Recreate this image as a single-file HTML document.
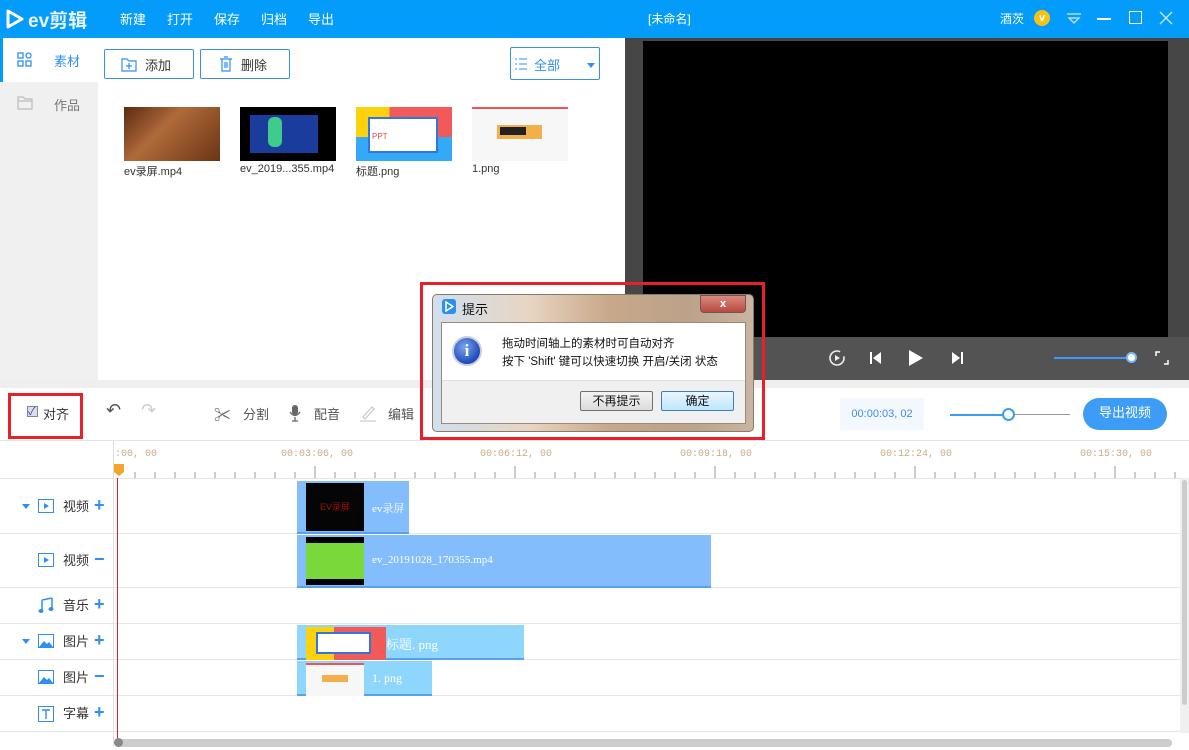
<!DOCTYPE html>
<html><head><meta charset="utf-8"><style>
*{margin:0;padding:0;box-sizing:border-box}
body{width:1189px;height:750px;overflow:hidden;position:relative;font-family:"Liberation Sans","Noto Sans CJK SC",sans-serif;font-size:13px;color:#333;background:#fff}
.a{position:absolute}
.tb{left:0;top:0;width:1189px;height:38px;background:#049cfb;color:#fff}
.menu span{position:absolute;top:9px;font-size:13px}
.btn{border:1px solid #3c8ee8;border-radius:2px;background:#fff;color:#333;font-size:13px}
.lbl{font-size:13px;color:#333}
.ruler span{position:absolute;top:8px;font-size:10px;color:#c9a985;font-family:"Liberation Mono",monospace}
.row{position:absolute;left:0;width:1180px;border-bottom:1px solid #e6e6e6}
.tl{position:absolute;font-size:13px;color:#333}
.plus{position:absolute;color:#2f8ff0;font-size:18px;font-weight:bold}
.clip{position:absolute;background:#84bdfb;border-bottom:2px solid #5a9ef0}
.clip span{position:absolute;color:#fff;font-family:"Liberation Serif","Noto Serif CJK SC",serif;font-size:11px}
</style></head><body>
<div class="a tb">
 <svg class="a" style="left:6px;top:9px" width="18" height="20"><path d="M2 2 L16 10 L2 18 Z" fill="none" stroke="#fff" stroke-width="3" stroke-linejoin="round"/></svg>
 <div class="a" style="left:28px;top:6px;font-size:19px;font-weight:bold;color:#e8f4ff">ev剪辑</div>
 <div class="menu"><span style="left:120px">新建</span><span style="left:167px">打开</span><span style="left:214px">保存</span><span style="left:261px">归档</span><span style="left:308px">导出</span></div>
 <div class="a" style="left:648px;top:10px;font-size:12px">[未命名]</div>
 <div class="a" style="left:1000px;top:10px;font-size:12px">酒茨</div>
 <div class="a" style="left:1034px;top:10px;width:16px;height:16px;border-radius:50%;background:#f6c315;color:#fff;font-size:11px;text-align:center;line-height:16px;font-weight:bold">v</div>
 <svg class="a" style="left:1066px;top:12px" width="16" height="14"><path d="M1 2H15M3 6H13L8 11Z" fill="none" stroke="#cde8ff" stroke-width="1.3"/></svg>
 <div class="a" style="left:1097px;top:18px;width:14px;height:1.5px;background:#fff"></div>
 <div class="a" style="left:1129px;top:11px;width:13px;height:13px;border:1.5px solid #fff"></div>
 <svg class="a" style="left:1159px;top:11px" width="14" height="14"><path d="M1 1L13 13M13 1L1 13" stroke="#cde8ff" stroke-width="1.3"/></svg>
</div>
<!-- sidebar -->
<div class="a" style="left:0;top:38px;width:98px;height:342px;background:#f0f0f0"></div>
<div class="a" style="left:0;top:38px;width:98px;height:44px;background:#fff;border-left:3px solid #049cfb"></div>
<svg class="a" style="left:17px;top:52px" width="16" height="16"><g fill="none" stroke="#2f8ff0" stroke-width="1.3"><rect x="1" y="1" width="5" height="5"/><rect x="1" y="9" width="5" height="5"/><rect x="9" y="9" width="5" height="5"/><circle cx="11.5" cy="3.5" r="2.5"/></g></svg>
<div class="a" style="left:54px;top:51px;color:#2f8ff0">素材</div>
<svg class="a" style="left:17px;top:96px" width="16" height="14"><path d="M1 1H6L8 3H15V13H1Z M1 5H15" fill="none" stroke="#bbb" stroke-width="1.2"/></svg>
<div class="a" style="left:54px;top:95px;color:#777">作品</div>
<!-- media -->
<div class="a btn" style="left:104px;top:49px;width:90px;height:30px"><svg class="a" style="left:16px;top:7px" width="16" height="15"><path d="M1 2H6L8 4H15V14H1Z M8 6V12M5 9H11" fill="none" stroke="#2f8ff0" stroke-width="1.2"/></svg><span class="a" style="left:40px;top:5px">添加</span></div>
<div class="a btn" style="left:200px;top:49px;width:90px;height:30px"><svg class="a" style="left:18px;top:6px" width="14" height="16"><path d="M1 3H13M5 1H9M3 3V15H11V3M6 6V12M8 6V12" fill="none" stroke="#2f8ff0" stroke-width="1.2"/></svg><span class="a" style="left:40px;top:5px">删除</span></div>
<div class="a btn" style="left:510px;top:47px;width:90px;height:33px"><svg class="a" style="left:4px;top:10px" width="12" height="12"><path d="M0 1H2M4 1H12M0 6H2M4 6H12M0 11H2M4 11H12" stroke="#2f8ff0"/></svg><span class="a" style="left:23px;top:7px;color:#2f8ff0">全部</span><div class="a" style="left:76px;top:15px;border:4px solid transparent;border-top:5px solid #2f8ff0"></div></div>
<div class="a" style="left:124px;top:107px;width:96px;height:54px;background:linear-gradient(135deg,#5a2a12,#b06a3a 40%,#6a3413)"></div>
<div class="a" style="left:240px;top:107px;width:96px;height:54px;background:#000"><div class="a" style="left:10px;top:8px;width:68px;height:38px;background:#1a3c9c"></div><div class="a" style="left:28px;top:10px;width:14px;height:30px;background:#3ecb8c;border-radius:6px"></div></div>
<div class="a" style="left:356px;top:107px;width:96px;height:54px;background:linear-gradient(90deg,#fdd10c 35%,#f25a5a 35%)"><div class="a" style="left:0;top:30px;width:96px;height:24px;background:#34a9f5"></div><div class="a" style="left:12px;top:10px;width:70px;height:36px;background:#fff;border:2px solid #3076e0"></div><div class="a" style="left:16px;top:25px;font-size:8px;color:#f04848">PPT</div></div>
<div class="a" style="left:472px;top:107px;width:96px;height:54px;background:#f7f7f7;border-top:2px solid #e55"><div class="a" style="left:25px;top:16px;width:45px;height:14px;background:#f3b04a"></div><div class="a" style="left:28px;top:18px;width:26px;height:8px;background:#222"></div></div>
<div class="a lbl" style="left:124px;top:163px;font-size:11px">ev录屏.mp4</div>
<div class="a lbl" style="left:240px;top:163px;font-size:11px">ev_2019...355.mp4</div>
<div class="a lbl" style="left:356px;top:163px;font-size:11px">标题.png</div>
<div class="a lbl" style="left:472px;top:163px;font-size:11px">1.png</div>
<!-- preview -->
<div class="a" style="left:625px;top:38px;width:564px;height:342px;background:#464646"></div>
<div class="a" style="left:643px;top:41px;width:525px;height:296px;background:#000"></div>
<div class="a" style="left:625px;top:337px;width:564px;height:43px;background:#535353"></div>
<svg class="a" style="left:828px;top:349px" width="18" height="18"><circle cx="9" cy="9" r="7" fill="none" stroke="#eee" stroke-width="1.6" stroke-dasharray="36 6"/><path d="M7 6L12 9L7 12Z" fill="#eee"/></svg>
<svg class="a" style="left:870px;top:351px" width="12" height="14"><path d="M1 1V13" stroke="#fff" stroke-width="2"/><path d="M11 1V13L3 7Z" fill="#fff"/></svg>
<svg class="a" style="left:908px;top:349px" width="16" height="18"><path d="M1 1L15 9L1 17Z" fill="#fff"/></svg>
<svg class="a" style="left:951px;top:351px" width="12" height="14"><path d="M1 1V13L9 7Z" fill="#fff"/><path d="M11 1V13" stroke="#fff" stroke-width="2"/></svg>
<div class="a" style="left:1054px;top:357px;width:78px;height:1.5px;background:#3c9cf5"></div>
<div class="a" style="left:1126px;top:352px;width:11px;height:11px;border-radius:50%;background:#fff;border:2px solid #7cb8f5"></div>
<svg class="a" style="left:1155px;top:351px" width="14" height="14"><path d="M1 5V1H5M13 9V13H9" fill="none" stroke="#fff" stroke-width="1.5"/></svg>
<div class="a" style="left:0;top:380px;width:1189px;height:8px;background:#eee"></div>
<!-- toolbar -->
<div class="a" style="left:27px;top:406px;width:11px;height:11px;border:1px solid #888;background:#dde"></div>
<div class="a" style="left:28px;top:403px;color:#2a4fa8;font-size:11px">✓</div>
<div class="a" style="left:43px;top:404px">对齐</div>
<div class="a" style="left:8px;top:393px;width:75px;height:46px;border:3px solid #e8202a"></div>
<div class="a" style="left:106px;top:400px;font-size:18px;color:#555">↶</div>
<div class="a" style="left:141px;top:400px;font-size:18px;color:#ccc">↷</div>
<div class="a" style="left:214px;top:401px;font-size:17px;color:#666">✂</div>
<div class="a" style="left:243px;top:404px;color:#555">分割</div>
<svg class="a" style="left:288px;top:404px" width="14" height="18"><rect x="4" y="1" width="6" height="10" rx="3" fill="#666"/><path d="M2 8Q7 15 12 8M7 13V17M4 17H10" fill="none" stroke="#666" stroke-width="1.3"/></svg>
<div class="a" style="left:314px;top:404px;color:#555">配音</div>
<svg class="a" style="left:359px;top:404px" width="18" height="18"><path d="M4 13L13 3L15 5L6 15Z M1 17H17" fill="none" stroke="#ccc" stroke-width="1.3"/></svg>
<div class="a" style="left:388px;top:404px;color:#555">编辑</div>
<div class="a" style="left:840px;top:398px;width:84px;height:32px;background:#f3f8ff;color:#3c8fe8;font-size:11px;text-align:center;line-height:32px">00:00:03, 02</div>
<div class="a" style="left:950px;top:414px;width:58px;height:1.5px;background:#3c9cf5"></div>
<div class="a" style="left:1008px;top:414px;width:62px;height:1px;background:#999"></div>
<div class="a" style="left:1002px;top:408px;width:13px;height:13px;border-radius:50%;background:#fff;border:2px solid #3c9cf5"></div>
<div class="a" style="left:1083px;top:398px;width:84px;height:32px;border-radius:16px;background:#3d9cf6;color:#fff;text-align:center;line-height:30px">导出视频</div>
<div class="a" style="left:0;top:440px;width:1189px;height:1px;background:#e4e4e4"></div>
<!-- ruler -->
<div class="a ruler" style="left:0;top:441px;width:1189px;height:37px">
<span style="left:115px">:00, 00</span><span style="left:281px">00:03:06, 00</span><span style="left:480px">00:06:12, 00</span><span style="left:680px">00:09:18, 00</span><span style="left:880px">00:12:24, 00</span><span style="left:1080px">00:15:30, 00</span>
<svg class="a" style="left:0;top:0" width="1189" height="37"><g stroke="#999"><path d="M135 31V37M155 31V37M175 31V37M195 31V37M215 31V37M235 31V37M255 31V37M275 31V37M295 31V37M335 31V37M355 31V37M375 31V37M395 31V37M415 31V37M435 31V37M455 31V37M475 31V37M495 31V37M535 31V37M555 31V37M575 31V37M595 31V37M615 31V37M635 31V37M655 31V37M675 31V37M695 31V37M735 31V37M755 31V37M775 31V37M795 31V37M815 31V37M835 31V37M855 31V37M875 31V37M895 31V37M935 31V37M955 31V37M975 31V37M995 31V37M1015 31V37M1035 31V37M1055 31V37M1075 31V37M1095 31V37M1135 31V37M1155 31V37M1175 31V37M315 25V37M515 25V37M715 25V37M915 25V37M1115 25V37"/></g><path d="M114 23H124V31L119 35L114 31Z" fill="#f2a52a"/></svg>
</div>
<div class="a" style="left:0;top:478px;width:1180px;height:1px;background:#e4e4e4"></div>
<!-- rows -->
<div class="row" style="top:479px;height:55px"></div>
<div class="row" style="top:534px;height:54px"></div>
<div class="row" style="top:588px;height:36px"></div>
<div class="row" style="top:624px;height:36px"></div>
<div class="row" style="top:660px;height:36px"></div>
<div class="row" style="top:696px;height:36px"></div>
<div class="a" style="left:113px;top:441px;width:1px;height:305px;background:#ddd"></div>
<div class="a" style="left:1180px;top:478px;width:9px;height:255px;background:#f0f0f0"></div>
<div class="a" style="left:1182px;top:480px;width:5px;height:225px;background:#ccc;border-radius:3px"></div>
<!-- labels -->
<div class="a" style="left:22px;top:504px;border:4px solid transparent;border-top:5px solid #2f8ff0"></div>
<div class="a" style="left:22px;top:639px;border:4px solid transparent;border-top:5px solid #2f8ff0"></div>
<svg class="a" style="left:38px;top:499px" width="16" height="14"><rect x="0.5" y="0.5" width="15" height="13" fill="none" stroke="#2f8ff0"/><path d="M6 4L11 7L6 10Z" fill="#2f8ff0"/></svg>
<svg class="a" style="left:38px;top:553px" width="16" height="14"><rect x="0.5" y="0.5" width="15" height="13" fill="none" stroke="#2f8ff0"/><path d="M6 4L11 7L6 10Z" fill="#2f8ff0"/></svg>
<svg class="a" style="left:38px;top:597px" width="16" height="17"><path d="M4 3V14M14 1V12M4 3L14 1" fill="none" stroke="#2f8ff0" stroke-width="1.5"/><ellipse cx="3" cy="14" rx="2.5" ry="2" fill="#2f8ff0"/><ellipse cx="13" cy="12" rx="2.5" ry="2" fill="#2f8ff0"/></svg>
<svg class="a" style="left:38px;top:634px" width="16" height="14"><rect x="0.5" y="0.5" width="15" height="13" fill="none" stroke="#2f8ff0"/><path d="M1 13L6 7L9 10L11 8L15 13Z" fill="#2f8ff0"/></svg>
<svg class="a" style="left:38px;top:670px" width="16" height="14"><rect x="0.5" y="0.5" width="15" height="13" fill="none" stroke="#2f8ff0"/><path d="M1 13L6 7L9 10L11 8L15 13Z" fill="#2f8ff0"/></svg>
<svg class="a" style="left:38px;top:706px" width="16" height="16"><rect x="0.5" y="0.5" width="15" height="15" fill="none" stroke="#2f8ff0"/><path d="M4 4H12M8 4V13" stroke="#2f8ff0" stroke-width="1.4"/></svg>
<div class="tl" style="left:63px;top:496px">视频</div><div class="plus" style="left:94px;top:495px">+</div>
<div class="tl" style="left:63px;top:550px">视频</div><div class="plus" style="left:94px;top:549px">−</div>
<div class="tl" style="left:63px;top:595px">音乐</div><div class="plus" style="left:94px;top:594px">+</div>
<div class="tl" style="left:63px;top:631px">图片</div><div class="plus" style="left:94px;top:630px">+</div>
<div class="tl" style="left:63px;top:667px">图片</div><div class="plus" style="left:94px;top:666px">−</div>
<div class="tl" style="left:63px;top:703px">字幕</div><div class="plus" style="left:94px;top:702px">+</div>
<!-- clips -->
<div class="clip" style="left:297px;top:481px;width:112px;height:53px"><div class="a" style="left:9px;top:2px;width:58px;height:48px;background:#050505;color:#a01010;font-size:9px;text-align:center;line-height:48px">EV录屏</div><span style="left:75px;top:19px">ev录屏</span></div>
<div class="clip" style="left:297px;top:535px;width:414px;height:53px"><div class="a" style="left:9px;top:2px;width:58px;height:48px;background:#000"><div class="a" style="left:0;top:6px;width:58px;height:36px;background:#7ad83a"></div></div><span style="left:75px;top:19px">ev_20191028_170355.mp4</span></div>
<div class="clip" style="left:297px;top:625px;width:227px;height:35px;background:#8fd6fd"><div class="a" style="left:9px;top:2px;width:80px;height:33px;background:linear-gradient(90deg,#fdd10c 35%,#f25a5a 35%)"><div class="a" style="left:10px;top:5px;width:55px;height:22px;background:#fff;border:2px solid #3076e0"></div></div><span style="left:89px;top:9px;font-size:13px">标题. png</span></div>
<div class="clip" style="left:297px;top:661px;width:135px;height:35px;background:#8fd6fd"><div class="a" style="left:9px;top:2px;width:58px;height:33px;background:#f7f7f7;border-top:2px solid #e55"><div class="a" style="left:16px;top:10px;width:26px;height:7px;background:#f3b04a"></div></div><span style="left:75px;top:10px;font-size:12px">1. png</span></div>
<div class="a" style="left:117px;top:478px;width:1px;height:266px;background:#e82020"></div>
<div class="a" style="left:115px;top:739px;width:1057px;height:8px;background:#ccc;border-radius:4px"></div>
<div class="a" style="left:114px;top:738px;width:9px;height:9px;border-radius:50%;background:#888"></div>
<!-- dialog -->
<div class="a" style="left:420px;top:282px;width:345px;height:158px;border:3px solid #e8202a"></div>
<div class="a" style="left:432px;top:294px;width:322px;height:138px;border:1px solid #8a7a6a;border-radius:5px;background:linear-gradient(90deg,#cfe0ef,#e8d5c2 30%,#c8a88a 55%,#bba28a 80%,#c9b5a0)"></div>
<div class="a" style="left:442px;top:299px;width:14px;height:15px;border-radius:3px;background:#2c8ef0"></div>
<svg class="a" style="left:444px;top:301px" width="10" height="11"><path d="M2 1L9 5.5L2 10Z" fill="none" stroke="#fff" stroke-width="1.6"/></svg>
<div class="a" style="left:462px;top:299px;font-size:13px;color:#111">提示</div>
<div class="a" style="left:700px;top:295px;width:46px;height:18px;border-radius:0 0 4px 4px;background:linear-gradient(#d88a80,#b84a40);border:1px solid #7a5050;color:#fff;text-align:center;font-size:11px;line-height:16px;font-weight:bold">x</div>
<div class="a" style="left:441px;top:322px;width:305px;height:102px;background:#f0f0f0;border:1px solid #9a8a7a"></div>
<div class="a" style="left:442px;top:323px;width:303px;height:58px;background:#fff;border-bottom:1px solid #dfdfdf"></div>
<div class="a" style="left:452px;top:336px;width:30px;height:30px;border-radius:50%;background:radial-gradient(circle at 40% 35%,#7aa6f0,#1e4bb8 70%);border:2px solid #c8d0dc;color:#fff;text-align:center;line-height:26px;font-weight:bold;font-family:'Liberation Serif',serif;font-size:17px">i</div>
<div class="a" style="left:502px;top:335px;font-size:11.5px;color:#111">拖动时间轴上的素材时可自动对齐</div>
<div class="a" style="left:502px;top:353px;font-size:11.5px;color:#111">按下 'Shift' 键可以快速切换 开启/关闭 状态</div>
<div class="a" style="left:580px;top:391px;width:73px;height:20px;border:1px solid #707070;border-radius:2px;background:linear-gradient(#f4f4f4,#dcdcdc);font-size:12px;text-align:center;line-height:18px;color:#111">不再提示</div>
<div class="a" style="left:661px;top:391px;width:73px;height:20px;border:1px solid #3c7fb1;border-radius:2px;background:linear-gradient(#eaf6fd,#bee6fd);font-size:12px;text-align:center;line-height:18px;color:#111">确定</div>
</body></html>
